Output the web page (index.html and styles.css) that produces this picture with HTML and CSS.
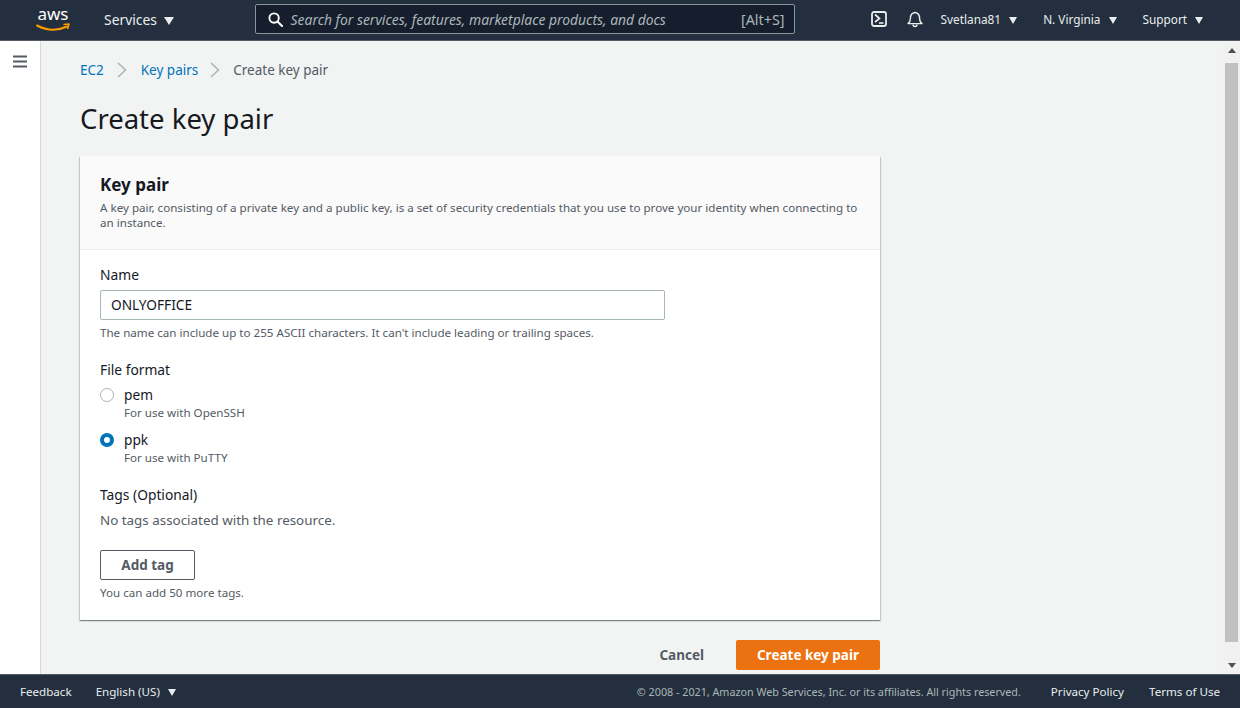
FILE: index.html
```html
<!DOCTYPE html>
<html lang="en">
<head>
<meta charset="utf-8">
<title>Create key pair</title>
<link rel="stylesheet" href="styles.css">
</head>
<body>
<header class="topbar">
  <svg class="aws-logo" width="34" height="38" viewBox="0 -4 34 38">
    <text x="17" y="16" class="aws-text" text-anchor="middle">aws</text>
    <path d="M1 21.5 Q16 29.5 31 22.5" fill="none" stroke="#f90" stroke-width="2" stroke-linecap="round"/>
    <path d="M27.5 20.5 L33 20 L31.5 25" fill="none" stroke="#f90" stroke-width="1.6" stroke-linejoin="round"/>
  </svg>
  <span class="menu services">Services <i class="caret big"></i></span>
  <div class="search">
    <svg width="15" height="15" viewBox="0 0 16 16" class="search-icon"><circle cx="6.5" cy="6.5" r="5" fill="none" stroke="#fff" stroke-width="2"/><path d="M10.3 10.3 L15 15" stroke="#fff" stroke-width="2.2" stroke-linecap="round"/></svg>
    <span class="search-text">Search for services, features, marketplace products, and docs</span>
    <span class="search-key">[Alt+S]</span>
  </div>
  <svg class="shell" width="16" height="16" viewBox="0 0 16 16"><rect x="1" y="1" width="14" height="14" rx="2" fill="none" stroke="#eaeded" stroke-width="1.8"/><path d="M4 3.5 L8.5 7.5 L4 11" fill="none" stroke="#eaeded" stroke-width="1.7"/><path d="M8 12 H12.5" stroke="#eaeded" stroke-width="1.6"/></svg>
  <svg class="bell" width="16" height="17" viewBox="0 0 16 17"><path d="M1 12.6 Q3.4 11 3.4 7.5 Q3.4 2 8 1.5 Q12.6 2 12.6 7.5 Q12.6 11 15 12.6 Z" fill="none" stroke="#eaeded" stroke-width="1.4" stroke-linejoin="round"/><path d="M6 13.5 a2 2 0 0 0 4 0" fill="none" stroke="#eaeded" stroke-width="1.4"/></svg>
  <span class="menu small user">Svetlana81 <i class="caret"></i></span>
  <span class="menu small region">N. Virginia <i class="caret"></i></span>
  <span class="menu small support">Support <i class="caret"></i></span>
</header>

<div class="middle">
  <aside class="rail">
    <svg width="14" height="13" viewBox="0 0 14 13"><path d="M0 1.5 H14 M0 6.5 H14 M0 11.5 H14" stroke="#545b64" stroke-width="2"/></svg>
  </aside>
  <main class="content">
    <nav class="crumbs">
      <a>EC2</a>
      <svg class="chev" width="10" height="16" viewBox="0 0 10 16"><path d="M1 1 L8.5 8 L1 15" fill="none" stroke="#aab7b8" stroke-width="1.6"/></svg>
      <a class="crumb-second">Key pairs</a>
      <svg class="chev" width="10" height="16" viewBox="0 0 10 16"><path d="M1 1 L8.5 8 L1 15" fill="none" stroke="#aab7b8" stroke-width="1.6"/></svg>
      <span>Create key pair</span>
    </nav>
    <h1>Create key pair</h1>
    <section class="card">
      <div class="card-head">
        <h2>Key pair</h2>
        <p>A key pair, consisting of a private key and a public key, is a set of security credentials that you use to prove your identity when connecting to an instance.</p>
      </div>
      <div class="card-body">
        <div class="label">Name</div>
        <div class="input">ONLYOFFICE</div>
        <div class="hint hint-name">The name can include up to 255 ASCII characters. It can't include leading or trailing spaces.</div>
        <div class="label label-format">File format</div>
        <div class="radio radio-first">
          <span class="dot"></span>
          <div><div class="radio-name">pem</div><div class="hint">For use with OpenSSH</div></div>
        </div>
        <div class="radio">
          <span class="dot on"></span>
          <div><div class="radio-name">ppk</div><div class="hint">For use with PuTTY</div></div>
        </div>
        <div class="label label-tags">Tags (Optional)</div>
        <div class="no-tags">No tags associated with the resource.</div>
        <button class="btn-add">Add tag</button>
        <div class="hint hint-tags">You can add 50 more tags.</div>
      </div>
    </section>
    <div class="actions">
      <span class="cancel">Cancel</span>
      <button class="btn-primary">Create key pair</button>
    </div>
  </main>
  <div class="scrollbar">
    <i class="arrow up"></i>
    <div class="thumb"></div>
    <i class="arrow down"></i>
  </div>
</div>

<footer class="footer">
  <span class="foot-link">Feedback</span>
  <span class="foot-lang">English (US) <i class="caret"></i></span>
  <span class="copy">© 2008 - 2021, Amazon Web Services, Inc. or its affiliates. All rights reserved.</span>
  <span class="foot-link policy">Privacy Policy</span>
  <span class="foot-link terms">Terms of Use</span>
</footer>
</body>
</html>
```
FILE: styles.css
```css
* { box-sizing: border-box; }
html, body { margin: 0; height: 100%; }
body {
  display: flex;
  flex-direction: column;
  height: 708px;
  overflow: hidden;
  font-family: "Noto Sans", "Open Sans", sans-serif;
  font-size: 14px;
  color: #16191f;
  background: #f2f3f3;
}
.topbar {
  flex: 0 0 41px;
  display: flex;
  align-items: center;
  background: #232f3e;
  border-bottom: 1px solid #545b64;
  color: #eaeded;
  padding: 0 0 2px 36px;
}
.aws-logo { flex: none; }
.aws-text { font: 17px "Noto Sans", sans-serif; fill: #fff; }
.menu { white-space: nowrap; }
.services { margin-left: 34px; font-size: 13.9px; }
.small { font-size: 11.8px; }
.caret {
  display: inline-block;
  width: 0; height: 0;
  margin-left: 5px;
  border-left: 4.5px solid transparent;
  border-right: 4.5px solid transparent;
  border-top: 7px solid #eaeded;
}
.caret.big { margin-left: 3px; border-left-width: 5.5px; border-right-width: 5.5px; border-top-width: 8px; }
.search {
  display: flex;
  align-items: center;
  width: 540px;
  height: 30px;
  margin-left: 81px;
  padding: 0 9px 0 12px;
  background: #161e2d;
  border: 1px solid #879596;
  border-radius: 2px;
}
.search-icon { flex: none; }
.search-text { flex: 1; margin-left: 8px; font-style: italic; font-size: 13.88px; color: #aab7b8; white-space: nowrap; }
.search-key { font-size: 14.4px; color: #aab7b8; }
.shell { flex: none; margin-left: 76px; }
.bell { flex: none; margin-left: 20px; }
.user { margin-left: 18px; }
.region { margin-left: 26px; }
.support { margin-left: 26px; }

.middle { flex: 1; display: flex; min-height: 0; }
.rail {
  flex: 0 0 41px;
  background: #fff;
  border-right: 1px solid #d5dbdb;
  padding: 12px 0 0 13px;
}
.content { flex: 1; padding: 0 343px 0 39px; min-width: 0; }
.crumbs {
  display: flex;
  align-items: center;
  gap: 13px;
  height: 20px;
  margin-top: 19px;
  font-size: 13.5px;
  color: #545b64;
}
.crumbs a { color: #0073bb; }
.crumb-second { margin-left: 1px; margin-right: -1px; }
h1 { margin: 19px 0 0; font-size: 27.5px; line-height: 40px; font-weight: 400; color: #16191f; }
.card {
  width: 800px;
  height: 464px;
  margin-top: 17px;
  background: #fff;
  box-shadow: 0 1px 1px 0 rgba(0,28,36,.3), 1px 1px 1px 0 rgba(0,28,36,.15), -1px 1px 1px 0 rgba(0,28,36,.15);
}
.card-head {
  height: 94px;
  padding: 18px 20px 0;
  background: #fafafa;
  border-bottom: 1px solid #eaeded;
}
h2 { margin: 0; font-size: 17px; line-height: 22px; font-weight: 700; }
.card-head p { margin: 4px 0 0; font-size: 11.62px; line-height: 15px; color: #545b64; }
.card-body { padding: 15px 20px 0; }
.label { font-size: 13.8px; line-height: 20px; }
.input {
  width: 565px;
  height: 30px;
  margin-top: 5px;
  padding: 0 10px;
  line-height: 28px;
  font-size: 13.7px;
  background: #fff;
  border: 1px solid #aab7b8;
  border-radius: 2px;
}
.hint { font-size: 11.6px; line-height: 15px; color: #545b64; }
.hint-name { margin-top: 5px; }
.label-format { margin-top: 20px; }
.radio { display: flex; gap: 10px; }
.radio .hint { margin-top: 1px; }
.radio-first { margin-top: 5px; margin-bottom: 10px; }
.radio-name { font-size: 13.7px; line-height: 19px; }
.dot {
  flex: none;
  width: 14px; height: 14px;
  margin-top: 3px;
  border-radius: 50%;
  border: 1px solid #aab7b8;
  background: #fff;
}
.dot.on { border: 4px solid #0073bb; }
.label-tags { margin-top: 20px; }
.no-tags { margin-top: 5px; font-size: 13.4px; line-height: 20px; color: #545b64; }
.btn-add {
  display: block;
  width: 95px;
  height: 30px;
  margin-top: 20px;
  background: #fff;
  border: 1px solid #545b64;
  border-radius: 2px;
  font: 700 13.5px "Noto Sans", sans-serif;
  color: #545b64;
}
.hint-tags { margin-top: 5px; }
.actions { display: flex; justify-content: flex-end; align-items: center; gap: 32px; width: 800px; margin-top: 20px; }
.cancel { font-weight: 700; font-size: 13.5px; color: #545b64; }
.btn-primary {
  width: 144px;
  height: 30px;
  background: #ec7211;
  border: 0;
  border-radius: 2px;
  font: 700 13.5px "Noto Sans", sans-serif;
  color: #fff;
}
.scrollbar {
  flex: 0 0 17px;
  display: flex;
  flex-direction: column;
  align-items: center;
  background: #f1f1f1;
  padding: 7px 0 6px;
}
.thumb { flex: none; width: 13px; height: 579px; margin: 10px 0 auto; background: #c1c1c1; }
.arrow { flex: none; width: 0; height: 0; border-left: 4px solid transparent; border-right: 4px solid transparent; }
.arrow.up { border-bottom: 5px solid #505050; }
.arrow.down { border-top: 5px solid #505050; }

.footer {
  flex: 0 0 34px;
  display: flex;
  align-items: center;
  padding: 0 20px;
  background: #232f3e;
  border-top: 1px solid #545b64;
  font-size: 11.6px;
  color: #eaeded;
}
.foot-lang { margin-left: 24px; }
.copy { margin-left: auto; font-size: 10.75px; color: #aab7b8; }
.policy { margin-left: 30px; }
.terms { margin-left: 25px; }
```
